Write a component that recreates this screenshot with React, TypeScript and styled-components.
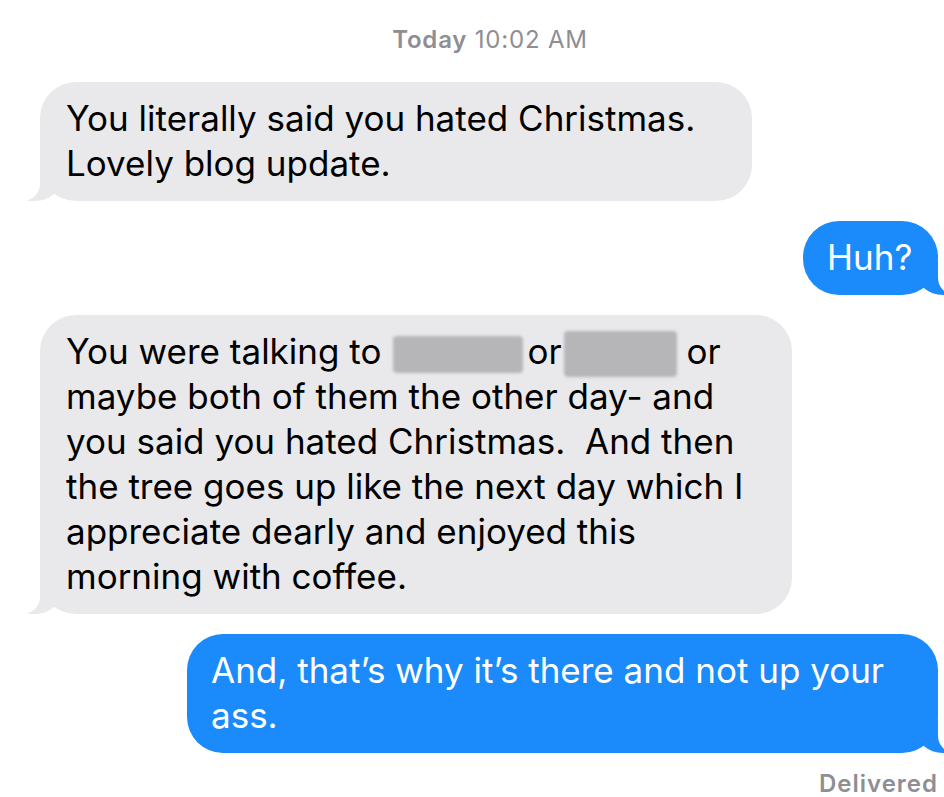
import React from "react";
import styled, { createGlobalStyle, css } from "styled-components";

const GlobalStyle = createGlobalStyle`
	html, body {
		margin: 0;
		padding: 0;
		background: #ffffff;
		overflow: hidden;
	}
	body {
		font-family: Inter, "Noto Sans", "Liberation Sans", sans-serif;
		-webkit-font-smoothing: antialiased;
	}
`;

const GRAY = "#e9e9eb";
const BLUE = "#1b8bfb";

const Thread = styled.div`
	width: 944px;
	height: 797px;
	box-sizing: border-box;
	padding-top: 26px;
	display: flex;
	flex-direction: column;
	overflow: hidden;
`;

const Stamp = styled.div`
	align-self: center;
	margin-left: 36px;
	font-size: 24px;
	letter-spacing: 0.8px;
	line-height: 28px;
	color: #8e8e93;
	margin-bottom: 28px;

	b {
		font-weight: 600;
	}
`;

const Row = styled.div<{ $mine?: boolean; $gap: number }>`
	display: flex;
	justify-content: ${(p) => (p.$mine ? "flex-end" : "flex-start")};
	padding: ${(p) => (p.$mine ? "0 6px 0 0" : "0 0 0 40px")};
	margin-bottom: ${(p) => p.$gap}px;
`;

const Bubble = styled.div<{ $mine?: boolean; $width: number }>`
	position: relative;
	box-sizing: border-box;
	width: ${(p) => p.$width}px;
	border-radius: 36px;
	font-size: 35px;
	line-height: 45px;
	white-space: nowrap;
	padding: 14px 0 15px 26px;
	color: ${(p) => (p.$mine ? "#ffffff" : "#000000")};
	background: ${(p) => (p.$mine ? BLUE : GRAY)};

	&::before,
	&::after {
		content: "";
		position: absolute;
		bottom: 0;
		height: 34px;
	}

	${(p) =>
		p.$mine
			? css`
					padding-left: 24px;
					&::before {
						right: -12px;
						width: 34px;
						background: ${BLUE};
						border-bottom-left-radius: 27px 24px;
					}
					&::after {
						right: -44px;
						width: 44px;
						background: #ffffff;
						border-bottom-left-radius: 17px;
					}
			  `
			: css`
					&::before {
						left: -12px;
						width: 34px;
						background: ${GRAY};
						border-bottom-right-radius: 27px 24px;
					}
					&::after {
						left: -44px;
						width: 44px;
						background: #ffffff;
						border-bottom-right-radius: 17px;
					}
			  `}
`;

/* blurred block hiding a name; negative margins keep it out of the line height */
const Redacted = styled.span<{ $w: number; $h: number; $before: number; $after: number }>`
	display: inline-block;
	width: ${(p) => p.$w}px;
	height: ${(p) => p.$h}px;
	margin: ${(p) => -(p.$h - 24) / 2}px ${(p) => p.$after}px ${(p) => -(p.$h - 24) / 2}px
		${(p) => p.$before}px;
	vertical-align: middle;
	background: #b6b6b8;
	border-radius: 4px;
	filter: blur(1.5px);
`;

const Status = styled.div`
	align-self: flex-end;
	margin-right: 6px;
	margin-top: 21px;
	font-size: 24px;
	letter-spacing: 1px;
	font-weight: 600;
	line-height: 20px;
	color: #8e8e93;
`;

export default function App() {
	return (
		<>
			<GlobalStyle />
			<Thread>
				<Stamp>
					<b>Today</b> 10:02 AM
				</Stamp>

				<Row $gap={20}>
					<Bubble $width={712}>
						You literally said you hated Christmas.
						<br />
						Lovely blog update.
					</Bubble>
				</Row>

				<Row $mine $gap={20}>
					<Bubble $mine $width={135}>
						Huh?
					</Bubble>
				</Row>

				<Row $gap={20}>
					<Bubble $width={752}>
						You were talking to
						<Redacted $w={130} $h={37} $before={12} $after={4} />
						or
						<Redacted $w={113} $h={46} $before={2} $after={0} /> or
						<br />
						maybe both of them the other day- and
						<br />
						you said you hated Christmas.&nbsp; And then
						<br />
						the tree goes up like the next day which I
						<br />
						appreciate dearly and enjoyed this
						<br />
						morning with coffee.
					</Bubble>
				</Row>

				<Row $mine $gap={0}>
					<Bubble $mine $width={751}>
						And, that’s why it’s there and not up your
						<br />
						ass.
					</Bubble>
				</Row>

				<Status>Delivered</Status>
			</Thread>
		</>
	);
}
